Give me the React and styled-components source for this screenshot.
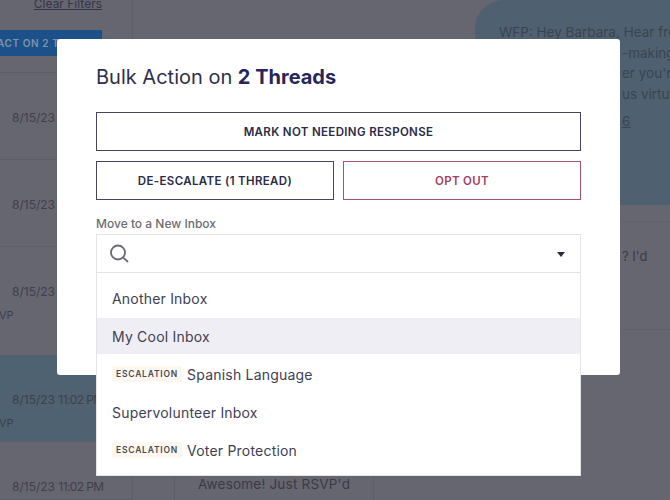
import React from 'react';
import styled, { createGlobalStyle } from 'styled-components';

const GlobalStyle = createGlobalStyle`
  html, body {
    margin: 0;
    padding: 0;
    background: #666670;
  }
  * {
    box-sizing: border-box;
  }
`;

const Page = styled.div`
  position: relative;
  display: grid;
  grid-template-columns: 133px 1fr;
  width: 670px;
  height: 500px;
  overflow: hidden;
  font-family: Inter, 'Liberation Sans', sans-serif;
  color: #3e3e4c;
  background: #666670;
`;

const Sidebar = styled.aside`
  display: flex;
  flex-direction: column;
  border-right: 1px solid #5f5f69;
`;

const FilterBar = styled.div`
  display: flex;
  flex-direction: column;
  align-items: flex-end;
  height: 73px;
  padding-right: 30px;
  border-bottom: 1px solid #5f5f69;
`;

const ClearLink = styled.a`
  height: 18px;
  margin-top: -5px;
  margin-bottom: 17px;
  font-size: 12px;
  line-height: 18px;
  color: #35354a;
  text-decoration: underline;
`;

const BulkButton = styled.div`
  width: 102px;
  height: 26px;
  overflow: hidden;
  font-size: 10px;
  font-weight: 600;
  line-height: 26px;
  letter-spacing: 0.6px;
  white-space: nowrap;
  color: #7f93a8;
  text-indent: -3px;
  background: #1c5088;
`;

const ThreadRow = styled.div`
  height: ${(p) => p.$height}px;
  padding: ${(p) => p.$top}px 0 0 12px;
  font-size: 12px;
  line-height: 18px;
  color: #3f3f4b;
  border-bottom: 1px solid #5f5f69;
  background: ${(p) => (p.$active ? '#4f6272' : 'transparent')};
`;

const RowTime = styled.span`
  letter-spacing: -0.6px;
`;

const RowTag = styled.div`
  margin: 6px 0 0 -13px;
  font-size: 11px;
  line-height: 16px;
`;

const Conversation = styled.main`
  position: relative;
  display: flex;
  flex-direction: column;
`;

const TopThread = styled.div`
  display: flex;
  justify-content: flex-end;
  height: 222px;
  border-bottom: 1px solid #62626c;
`;

const Bubble = styled.div`
  width: 195px;
  height: 205px;
  padding: 22px 0 0 24px;
  overflow: hidden;
  font-size: 13.5px;
  line-height: 20.6px;
  white-space: nowrap;
  color: #3a4450;
  background: #4f6170;
  border-radius: 28px 0 0 0;
`;

const BubbleLine = styled.div`
  padding-left: ${(p) => p.$indent || 0}px;
`;

const BubbleLink = styled.a`
  display: block;
  margin: 7px 0 0 123px;
  text-decoration: underline;
`;

const ReplyText = styled.div`
  align-self: flex-end;
  width: 48px;
  height: 108px;
  padding-top: 26px;
  font-size: 13px;
  line-height: 16px;
  color: #3a3a46;
  border-bottom: 1px solid #5f5f69;
`;

const BottomThread = styled.div`
  display: flex;
  margin-top: auto;
  height: 24px;
`;

const TimeCell = styled.div`
  width: 42px;
  border-right: 1px solid #5f5f69;
`;

const AwesomeCell = styled.div`
  width: 199px;
  padding: 0 0 0 23px;
  font-size: 13.5px;
  line-height: 16px;
  letter-spacing: 0.2px;
  white-space: nowrap;
  color: #3a3a46;
  border-right: 1px solid #5f5f69;
`;

const Modal = styled.section`
  position: absolute;
  top: 39px;
  left: 57px;
  width: 563px;
  height: 336px;
  padding: 25px 39px 0;
  background: #ffffff;
  border-radius: 3px;
`;

const Title = styled.h2`
  margin: 0 0 22px;
  font-size: 20px;
  font-weight: 400;
  line-height: 26px;
  color: #30304a;
`;

const Strong = styled.strong`
  font-weight: 700;
  color: #26265a;
`;

const ActionGrid = styled.div`
  display: grid;
  grid-template-columns: 238px 238px;
  gap: 10px 9px;
`;

const ActionButton = styled.button`
  grid-column: ${(p) => (p.$wide ? '1 / span 2' : 'auto')};
  height: 39px;
  padding: 0;
  font-family: inherit;
  font-size: 11.5px;
  font-weight: 600;
  letter-spacing: 0.35px;
  color: ${(p) => (p.$danger ? '#a3405f' : '#2b2b45')};
  background: #ffffff;
  border: 1px solid ${(p) => (p.$danger ? '#a8506c' : '#44445a')};
`;

const FieldLabel = styled.label`
  display: block;
  margin: 16px 0 2px;
  font-size: 12px;
  font-weight: 500;
  line-height: 16px;
  color: #6c6c72;
`;

const SelectBox = styled.div`
  display: flex;
  align-items: center;
  justify-content: space-between;
  width: 485px;
  height: 39px;
  padding: 0 15px 0 13px;
  background: #ffffff;
  border: 1px solid #e4e4e6;
`;

const Caret = styled.span`
  width: 0;
  height: 0;
  margin-top: 1px;
  border-top: 5px solid #2b2b45;
  border-left: 4.5px solid transparent;
  border-right: 4.5px solid transparent;
`;

const Menu = styled.ul`
  position: absolute;
  top: 234px;
  left: 39px;
  display: flex;
  flex-direction: column;
  gap: 2px;
  width: 485px;
  height: 203px;
  margin: 0;
  padding: 7px 0 0;
  list-style: none;
  background: #ffffff;
  border: 1px solid #e4e4e6;
  border-top: 0;
`;

const MenuItem = styled.li`
  display: flex;
  align-items: center;
  gap: 5px;
  height: 36px;
  padding-left: 15px;
  font-size: 14px;
  letter-spacing: 0.2px;
  color: #3e3e55;
  background: ${(p) => (p.$active ? '#eeeef4' : 'transparent')};
`;

const Badge = styled.span`
  padding: 2px 4px;
  font-size: 8.5px;
  font-weight: 600;
  letter-spacing: 0.8px;
  line-height: 12px;
  color: #4a4a55;
  background: #fdf8ef;
`;

const SearchIcon = () => (
  <svg width="20" height="20" viewBox="0 0 20 20" fill="none" stroke="#6b6b73" strokeWidth="1.8" strokeLinecap="round">
    <circle cx="8" cy="8.5" r="7" />
    <path d="M13.2 13.7L17.5 17.5" />
  </svg>
);

const threads = [
  { height: 87, top: 36, date: '8/15/23' },
  { height: 87, top: 36, date: '8/15/23' },
  { height: 109, top: 36, date: '8/15/23', tag: 'VP' },
];

const inboxes = [
  { name: 'Another Inbox' },
  { name: 'My Cool Inbox', active: true },
  { name: 'Spanish Language', escalation: true },
  { name: 'Supervolunteer Inbox' },
  { name: 'Voter Protection', escalation: true },
];

export default function App() {
  return (
    <>
      <GlobalStyle />
      <Page>
        <Sidebar>
          <FilterBar>
            <ClearLink>Clear Filters</ClearLink>
            <BulkButton>ACT ON 2 THREADS</BulkButton>
          </FilterBar>
          {threads.map((t, i) => (
            <ThreadRow key={i} $height={t.height} $top={t.top}>
              {t.date}
              {t.tag && <RowTag>{t.tag}</RowTag>}
            </ThreadRow>
          ))}
          <ThreadRow $height={86} $top={35} $active>
            8/15/23 <RowTime>11:02 PM</RowTime>
            <RowTag>VP</RowTag>
          </ThreadRow>
          <ThreadRow $height={58} $top={36}>
            8/15/23 <RowTime>11:02 PM</RowTime>
          </ThreadRow>
        </Sidebar>
        <Conversation>
          <TopThread>
            <Bubble>
              <BubbleLine>WFP: Hey Barbara, Hear from</BubbleLine>
              <BubbleLine $indent={123}>-making</BubbleLine>
              <BubbleLine $indent={123}>er you're</BubbleLine>
              <BubbleLine $indent={123}>us virtually</BubbleLine>
              <BubbleLink>6</BubbleLink>
            </Bubble>
          </TopThread>
          <ReplyText>? I'd</ReplyText>
          <BottomThread>
            <TimeCell />
            <AwesomeCell>Awesome! Just RSVP'd</AwesomeCell>
          </BottomThread>
        </Conversation>
        <Modal>
          <Title>
            Bulk Action on <Strong>2 Threads</Strong>
          </Title>
          <ActionGrid>
            <ActionButton $wide>MARK NOT NEEDING RESPONSE</ActionButton>
            <ActionButton>DE-ESCALATE (1 THREAD)</ActionButton>
            <ActionButton $danger>OPT OUT</ActionButton>
          </ActionGrid>
          <FieldLabel>Move to a New Inbox</FieldLabel>
          <SelectBox>
            <SearchIcon />
            <Caret />
          </SelectBox>
          <Menu>
            {inboxes.map((inbox) => (
              <MenuItem key={inbox.name} $active={inbox.active}>
                {inbox.escalation && <Badge>ESCALATION</Badge>}
                {inbox.name}
              </MenuItem>
            ))}
          </Menu>
        </Modal>
      </Page>
    </>
  );
}
